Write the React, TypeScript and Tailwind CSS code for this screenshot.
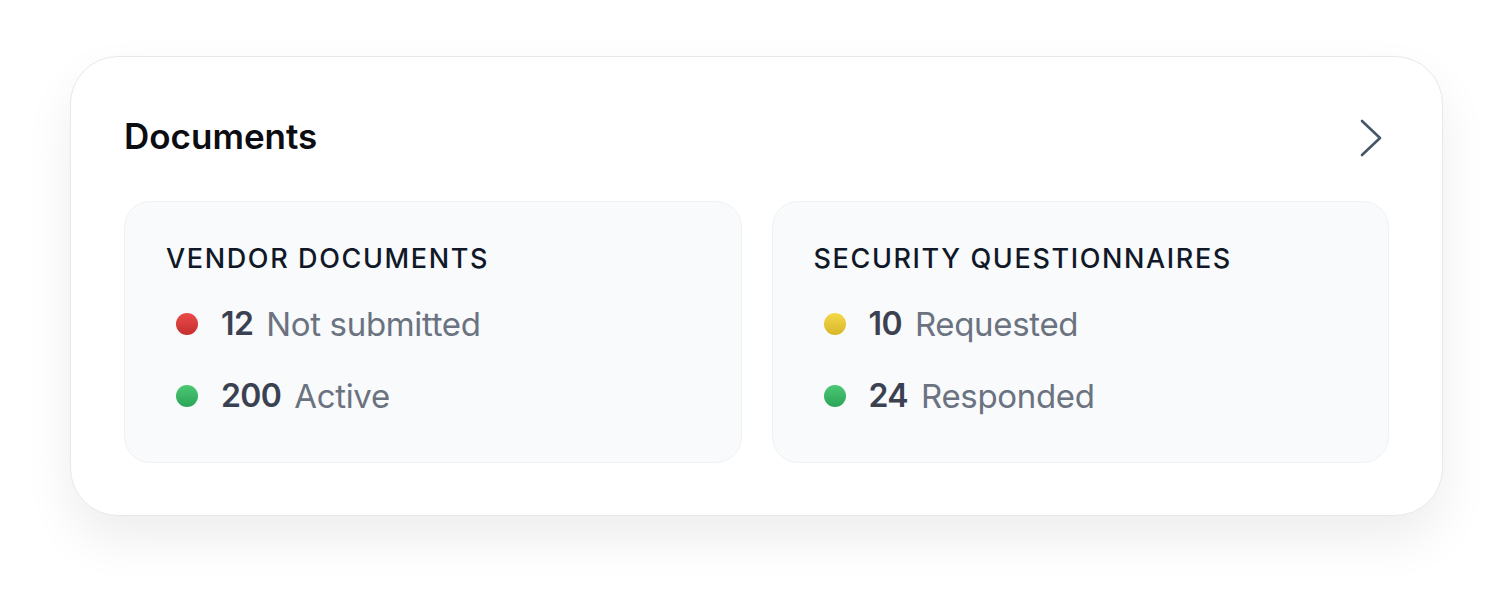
const Dot = ({ color }: { color: "red" | "green" | "yellow" }) => {
  const styles = {
    red: "bg-linear-to-b from-[#ec4a4a] to-[#c42f2f]",
    green: "bg-linear-to-b from-[#4cc873] to-[#2aa457]",
    yellow: "bg-linear-to-b from-[#f5d94a] to-[#d8b627]",
  };
  return <span className={`inline-block w-[22px] h-[22px] rounded-full ${styles[color]}`} />;
};

type Stat = { count: string; label: string; color: "red" | "green" | "yellow" };

const StatBox = ({ title, stats }: { title: string; stats: Stat[] }) => (
  <div className="flex-1 rounded-[26px] bg-[#f8fafc] border border-[#eff2f5] pl-[41px] pt-[41px] pb-[46px]">
    <h3 className="text-[27px] leading-[32px] font-medium tracking-[0.06em] text-[#111827]">
      {title}
    </h3>
    <div className="mt-[29px] flex flex-col gap-[32px] pl-[10px]">
      {stats.map((s) => (
        <div key={s.label} className="flex items-center h-[40px]">
          <Dot color={s.color} />
          <span className="ml-[23px] text-[32px] leading-[40px] font-semibold text-[#3b4150] tracking-[-0.02em]">
            {s.count}
          </span>
          <span className="ml-[13px] text-[33px] leading-[40px] text-[#6b7280] tracking-[-0.01em]">
            {s.label}
          </span>
        </div>
      ))}
    </div>
  </div>
);

const App = () => {
  return (
    <div className="min-h-screen bg-white pt-[56px] pl-[70px] pr-[57px]" style={{ fontFamily: "Inter, 'Noto Sans', sans-serif" }}>
      <div className="rounded-[48px] bg-white border border-[#e6e8eb] shadow-[0_24px_50px_rgba(0,0,0,0.07)] px-[53px] pt-[57px] pb-[52px]">
        <div className="flex items-center justify-between">
          <h2 className="text-[35px] leading-[44px] font-semibold text-[#0b0d12]">Documents</h2>
          <svg width="28" height="40" viewBox="0 0 28 40" fill="none" className="mr-[4px] mt-[4px]">
            <path d="M5 3 L23 20 L5 37" stroke="#475569" strokeWidth="2.6" strokeLinecap="round" strokeLinejoin="round" />
          </svg>
        </div>
        <div className="mt-[43px] flex gap-[30px]">
          <StatBox
            title="VENDOR DOCUMENTS"
            stats={[
              { count: "12", label: "Not submitted", color: "red" },
              { count: "200", label: "Active", color: "green" },
            ]}
          />
          <StatBox
            title="SECURITY QUESTIONNAIRES"
            stats={[
              { count: "10", label: "Requested", color: "yellow" },
              { count: "24", label: "Responded", color: "green" },
            ]}
          />
        </div>
      </div>
    </div>
  );
};

export default App;
